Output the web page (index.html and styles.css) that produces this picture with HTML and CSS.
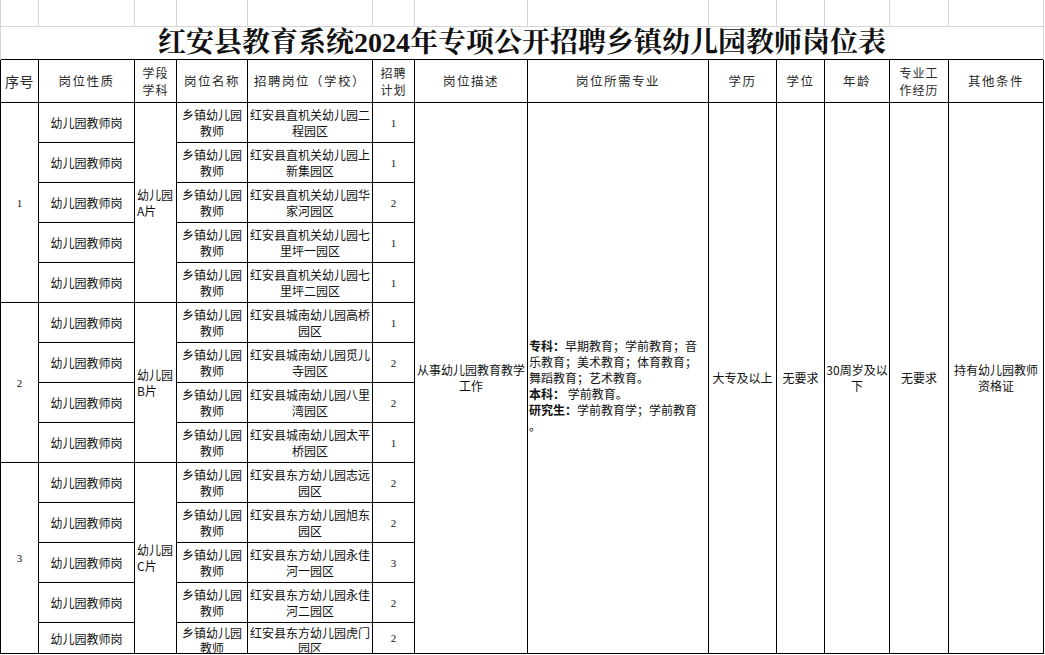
FILE: index.html
```html
<!DOCTYPE html>
<html lang="zh-CN">
<head>
<meta charset="utf-8">
<title>红安县教育系统2024年专项公开招聘乡镇幼儿园教师岗位表</title>
<link rel="stylesheet" href="styles.css">
</head>
<body>
<table class="sheet">
  <colgroup>
    <col class="w38"><col class="w96"><col class="w42"><col class="w71"><col class="w125"><col class="w42"><col class="w113"><col class="w181"><col class="w68"><col class="w48"><col class="w65"><col class="w59"><col class="w95">
  </colgroup>
  <tr class="grid-row">
    <td></td><td></td><td></td><td></td><td></td><td></td><td></td><td></td><td></td><td></td><td></td><td></td><td></td>
  </tr>
  <tr class="title-row">
    <td colspan="13" class="title">红安县教育系统2024年专项公开招聘乡镇幼儿园教师岗位表</td>
  </tr>
  <tr class="head">
    <th class="big">序号</th>
    <th>岗位性质</th>
    <th class="tight">学段<br>学科</th>
    <th>岗位名称</th>
    <th>招聘岗位（学校）</th>
    <th class="tight">招聘<br>计划</th>
    <th>岗位描述</th>
    <th>岗位所需专业</th>
    <th>学历</th>
    <th>学位</th>
    <th>年龄</th>
    <th class="tight">专业工<br>作经历</th>
    <th>其他条件</th>
  </tr>

  <tr class="data">
    <td rowspan="5" class="num">1</td>
    <td>幼儿园教师岗</td>
    <td rowspan="5" class="stage">幼儿园<br>A片</td>
    <td>乡镇幼儿园<br>教师</td>
    <td>红安县直机关幼儿园二<br>程园区</td>
    <td class="num">1</td>
    <td rowspan="14" class="merged">从事幼儿园教育教学<br>工作</td>
    <td rowspan="14" class="merged major"><b>专科：</b>早期教育；学前教育；音<br>乐教育；美术教育；体育教育；<br>舞蹈教育；艺术教育。<br><b>本科：</b> 学前教育。<br><b>研究生：</b>学前教育学；学前教育<br>。</td>
    <td rowspan="14" class="merged">大专及以上</td>
    <td rowspan="14" class="merged">无要求</td>
    <td rowspan="14" class="merged">30周岁及以<br>下</td>
    <td rowspan="14" class="merged">无要求</td>
    <td rowspan="14" class="merged">持有幼儿园教师<br>资格证</td>
  </tr>
  <tr class="data">
    <td>幼儿园教师岗</td>
    <td>乡镇幼儿园<br>教师</td>
    <td>红安县直机关幼儿园上<br>新集园区</td>
    <td class="num">1</td>
  </tr>
  <tr class="data">
    <td>幼儿园教师岗</td>
    <td>乡镇幼儿园<br>教师</td>
    <td>红安县直机关幼儿园华<br>家河园区</td>
    <td class="num">2</td>
  </tr>
  <tr class="data">
    <td>幼儿园教师岗</td>
    <td>乡镇幼儿园<br>教师</td>
    <td>红安县直机关幼儿园七<br>里坪一园区</td>
    <td class="num">1</td>
  </tr>
  <tr class="data">
    <td>幼儿园教师岗</td>
    <td>乡镇幼儿园<br>教师</td>
    <td>红安县直机关幼儿园七<br>里坪二园区</td>
    <td class="num">1</td>
  </tr>

  <tr class="data">
    <td rowspan="4" class="num">2</td>
    <td>幼儿园教师岗</td>
    <td rowspan="4" class="stage">幼儿园<br>B片</td>
    <td>乡镇幼儿园<br>教师</td>
    <td>红安县城南幼儿园高桥<br>园区</td>
    <td class="num">1</td>
  </tr>
  <tr class="data">
    <td>幼儿园教师岗</td>
    <td>乡镇幼儿园<br>教师</td>
    <td>红安县城南幼儿园觅儿<br>寺园区</td>
    <td class="num">2</td>
  </tr>
  <tr class="data">
    <td>幼儿园教师岗</td>
    <td>乡镇幼儿园<br>教师</td>
    <td>红安县城南幼儿园八里<br>湾园区</td>
    <td class="num">2</td>
  </tr>
  <tr class="data">
    <td>幼儿园教师岗</td>
    <td>乡镇幼儿园<br>教师</td>
    <td>红安县城南幼儿园太平<br>桥园区</td>
    <td class="num">1</td>
  </tr>

  <tr class="data">
    <td rowspan="5" class="num">3</td>
    <td>幼儿园教师岗</td>
    <td rowspan="5" class="stage">幼儿园<br>C片</td>
    <td>乡镇幼儿园<br>教师</td>
    <td>红安县东方幼儿园志远<br>园区</td>
    <td class="num">2</td>
  </tr>
  <tr class="data">
    <td>幼儿园教师岗</td>
    <td>乡镇幼儿园<br>教师</td>
    <td>红安县东方幼儿园旭东<br>园区</td>
    <td class="num">2</td>
  </tr>
  <tr class="data">
    <td>幼儿园教师岗</td>
    <td>乡镇幼儿园<br>教师</td>
    <td>红安县东方幼儿园永佳<br>河一园区</td>
    <td class="num">3</td>
  </tr>
  <tr class="data">
    <td>幼儿园教师岗</td>
    <td>乡镇幼儿园<br>教师</td>
    <td>红安县东方幼儿园永佳<br>河二园区</td>
    <td class="num">2</td>
  </tr>
  <tr class="data last">
    <td><div class="cut single">幼儿园教师岗</div></td>
    <td><div class="cut">乡镇幼儿园<br>教师</div></td>
    <td><div class="cut">红安县东方幼儿园虎门<br>园区</div></td>
    <td class="num"><div class="cut single">2</div></td>
  </tr>
</table>
</body>
</html>
```

FILE: styles.css
```css
html, body {
  margin: 0;
  padding: 0;
  background: #ffffff;
}

body {
  font-family: "Noto Sans CJK SC", "Noto Sans", sans-serif;
  color: #000;
}

.sheet {
  border-collapse: collapse;
  table-layout: fixed;
  width: 1044px;
}

.w38 { width: 38px; }
.w96 { width: 96px; }
.w42 { width: 42px; }
.w71 { width: 71px; }
.w125 { width: 125px; }
.w113 { width: 113px; }
.w181 { width: 181px; }
.w68 { width: 68px; }
.w48 { width: 48px; }
.w65 { width: 65px; }
.w59 { width: 59px; }
.w95 { width: 95px; }

.sheet td,
.sheet th {
  padding: 0;
}

/* spreadsheet gridline row */
.grid-row td {
  height: 26px;
  border-right: 1px solid #d6d6d6;
  border-bottom: 1px solid #d6d6d6;
}
.grid-row td:first-child {
  border-left: 1px solid #d6d6d6;
}

/* title */
.title {
  height: 32px;
  border-left: 1px solid #d6d6d6;
  border-right: 1px solid #d6d6d6;
  text-align: center;
  vertical-align: middle;
  font-family: "Liberation Serif", "Noto Serif CJK SC", "Noto Sans CJK SC", serif;
  font-weight: 700;
  font-size: 28px;
  line-height: 32px;
  color: #111;
  white-space: nowrap;
}

/* header row */
.head th {
  height: 42px;
  border: 1px solid #000;
  font-weight: 400;
  font-size: 12.5px;
  letter-spacing: 1.5px;
  line-height: 16px;
  color: #2a2a2a;
  text-align: center;
  vertical-align: middle;
  white-space: nowrap;
}
.head th.big {
  font-size: 14px;
  letter-spacing: 0.5px;
}
.head th.tight {
  letter-spacing: 1px;
  line-height: 17px;
  font-size: 12px;
}

/* data rows */
.data td {
  height: 39px;
  border: 1px solid #000;
  font-size: 12px;
  line-height: 16px;
  text-align: center;
  vertical-align: middle;
  white-space: nowrap;
  color: #111;
}

.data td.num {
  font-family: "Liberation Serif", serif;
  font-size: 11px;
}

.data td.stage {
  text-align: left;
  padding-left: 2px;
  line-height: 16px;
}

.data td.merged {
  line-height: 16px;
}

.data td.major {
  text-align: left;
  padding: 15px 0 0 1px;
  line-height: 16px;
}
.data td.major b {
  font-weight: 700;
}

/* last (cut-off) row */
.data.last td {
  height: 30px;
  vertical-align: top;
}
.cut {
  height: 30px;
  box-sizing: border-box;
  padding-top: 2px;
  line-height: 15px;
  overflow: visible;
}
.cut.single {
  padding-top: 8px;
}
```
